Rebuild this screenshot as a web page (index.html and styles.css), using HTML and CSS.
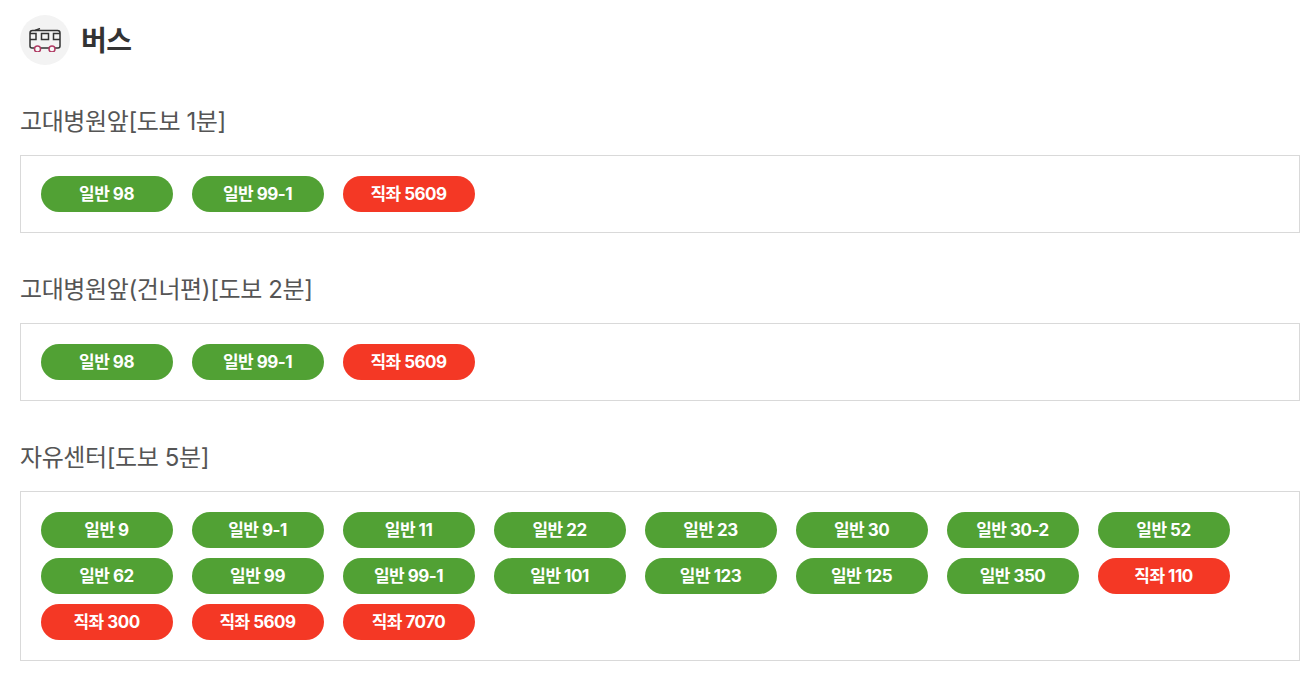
FILE: index.html
```html
<!DOCTYPE html>
<html lang="ko">
<head>
    <meta charset="UTF-8">
    <title>버스</title>
    <link rel="stylesheet" href="styles.css">
</head>
<body>
    <div class="container">
        <h2 class="title">
            <span class="title-icon">
                <svg width="32" height="24" viewBox="0 0 32 24" fill="none">
                    <path d="M1 18V5C1 3.500 2 2.500 3.500 2.500H28.500C30 2.500 31 3.500 31 5V18C31 19.200 30.200 20 29 20H3C1.800 20 1 19.200 1 18Z" stroke="#333" stroke-width="1.500"/>
                    <path d="M6 2.500L11 0.500" stroke="#333" stroke-width="1.500"/>
                    <path d="M1 5.500H7V11.500H1M12.500 5.500H19.500V11.500H12.500ZM31 5.500H24.500V11.500H31" stroke="#333" stroke-width="1.500"/>
                    <circle cx="8.500" cy="21" r="3" fill="#f8f8f8" stroke="#b03a63" stroke-width="1.500"/>
                    <circle cx="23" cy="21" r="3" fill="#f8f8f8" stroke="#b03a63" stroke-width="1.500"/>
                </svg>
            </span>
            버스
        </h2>

        <h3 class="stop-name">고대병원앞[도보 1분]</h3>
        <div class="bus-box">
            <span class="bus normal">일반 98</span>
            <span class="bus normal">일반 99-1</span>
            <span class="bus direct">직좌 5609</span>
        </div>

        <h3 class="stop-name">고대병원앞(건너편)[도보 2분]</h3>
        <div class="bus-box">
            <span class="bus normal">일반 98</span>
            <span class="bus normal">일반 99-1</span>
            <span class="bus direct">직좌 5609</span>
        </div>

        <h3 class="stop-name">자유센터[도보 5분]</h3>
        <div class="bus-box">
            <span class="bus normal">일반 9</span>
            <span class="bus normal">일반 9-1</span>
            <span class="bus normal">일반 11</span>
            <span class="bus normal">일반 22</span>
            <span class="bus normal">일반 23</span>
            <span class="bus normal">일반 30</span>
            <span class="bus normal">일반 30-2</span>
            <span class="bus normal">일반 52</span>
            <span class="bus normal">일반 62</span>
            <span class="bus normal">일반 99</span>
            <span class="bus normal">일반 99-1</span>
            <span class="bus normal">일반 101</span>
            <span class="bus normal">일반 123</span>
            <span class="bus normal">일반 125</span>
            <span class="bus normal">일반 350</span>
            <span class="bus direct">직좌 110</span>
            <span class="bus direct">직좌 300</span>
            <span class="bus direct">직좌 5609</span>
            <span class="bus direct">직좌 7070</span>
        </div>
    </div>
</body>
</html>
```

FILE: styles.css
```css
body {
    margin: 0;
    background-color: #ffffff;
    font-family: Inter, "Noto Sans CJK KR", sans-serif;
}
.container {
    padding: 15px 14px 0 20px;
}
.title {
    display: flex;
    align-items: flex-start;
    gap: 11px;
    height: 50px;
    margin: 0;
    color: #333333;
    font-size: 28px;
    font-weight: 700;
    line-height: 52px;
    letter-spacing: -0.5px;
}
.title-icon {
    display: flex;
    align-items: center;
    justify-content: center;
    width: 50px;
    height: 50px;
    border-radius: 50%;
    background-color: #f3f3f3;
}
.stop-name {
    margin: 39px 0 17px;
    color: #555555;
    font-size: 24px;
    font-weight: 400;
    line-height: 36px;
    height: 34px;
    letter-spacing: -0.4px;
}
.bus-box {
    display: flex;
    flex-wrap: wrap;
    gap: 10px 19px;
    padding: 20px;
    border: 1px solid #d9d9d9;
}
.bus {
    width: 132px;
    height: 36px;
    border-radius: 18px;
    color: #ffffff;
    font-size: 17px;
    font-weight: 700;
    line-height: 36px;
    text-align: center;
    letter-spacing: -0.5px;
    text-indent: -1px;
}
.normal {
    background-color: #51a134;
}
.direct {
    background-color: #f43825;
}
```
